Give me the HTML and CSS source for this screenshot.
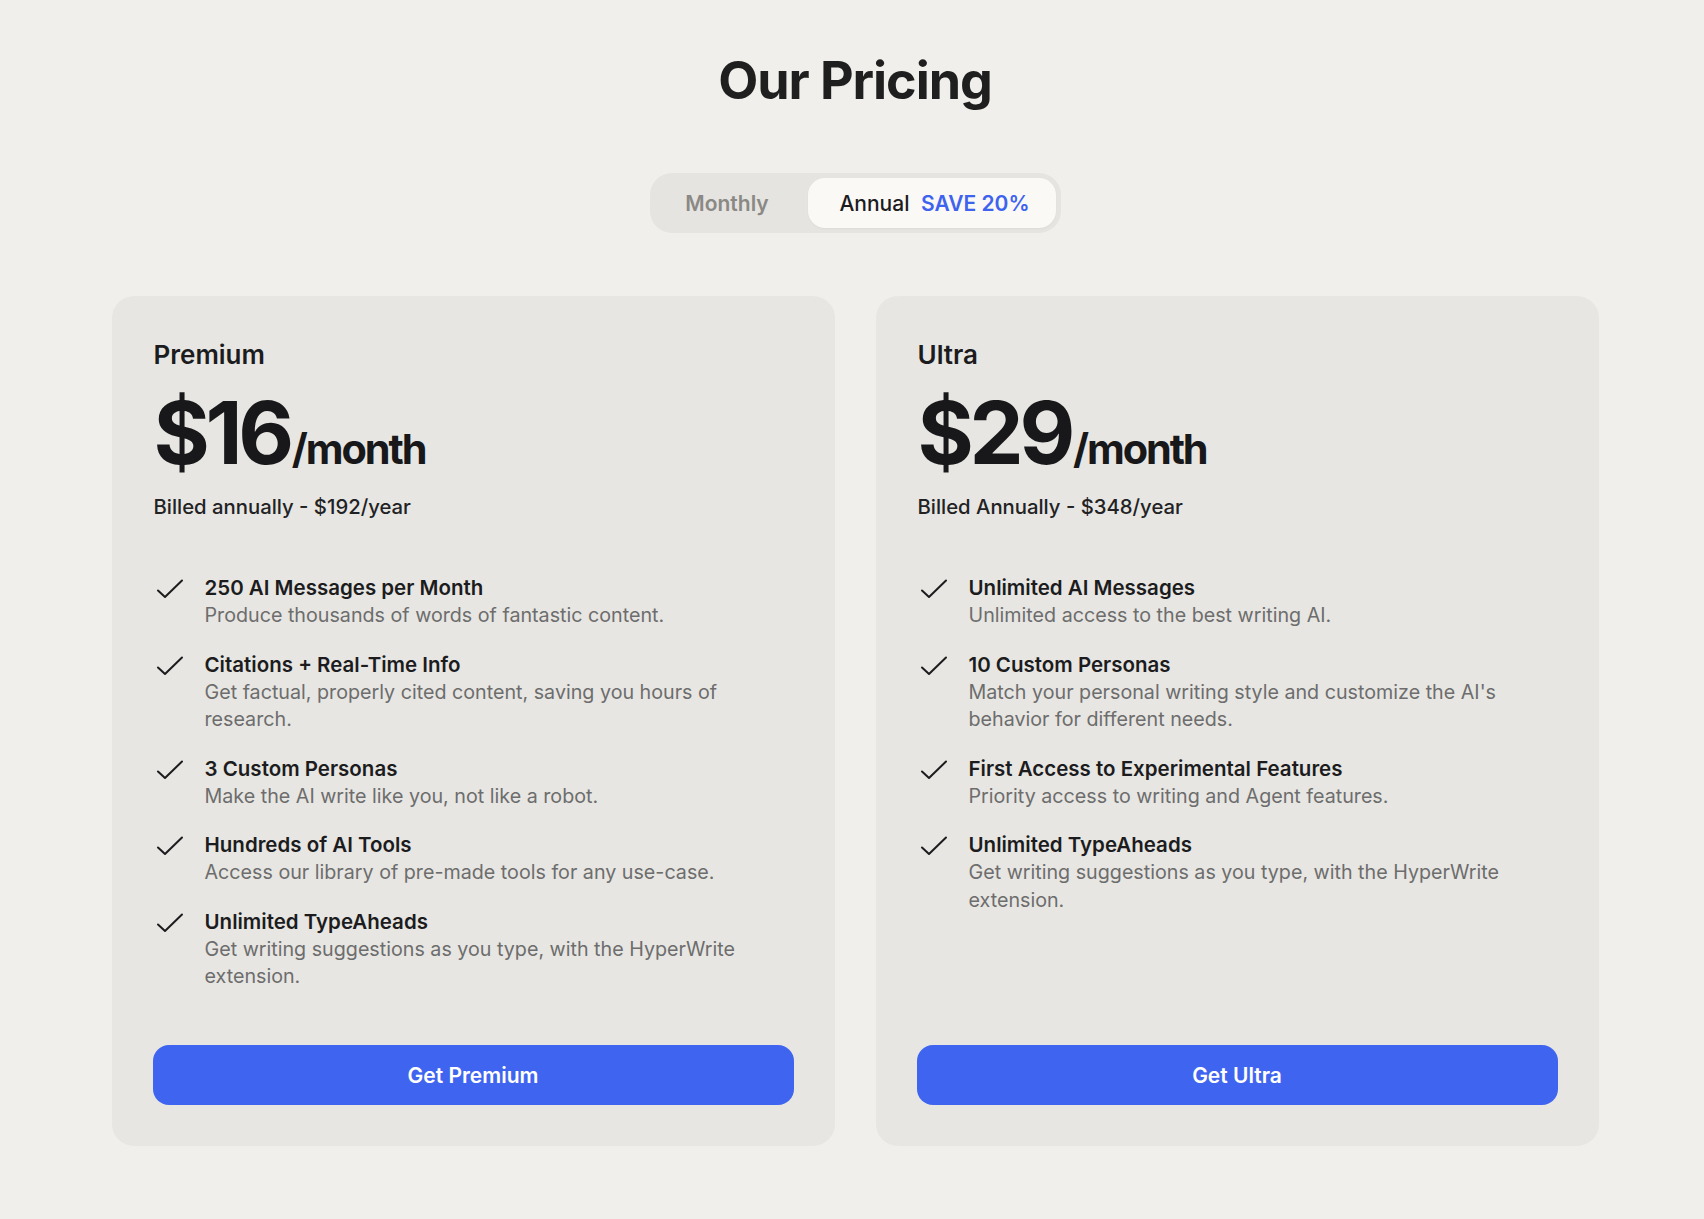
FILE: index.html
```html
<!DOCTYPE html>
<html lang="en">
<head>
<meta charset="utf-8">
<title>Our Pricing</title>
<link rel="stylesheet" href="styles.css">
</head>
<body>
<main class="page">
  <h1 class="page-title">Our Pricing</h1>

  <div class="toggle">
    <button class="toggle-opt">Monthly</button>
    <button class="toggle-opt is-active">Annual <span class="save">SAVE 20%</span></button>
  </div>

  <section class="plans">
    <article class="plan">
      <h2 class="plan-name">Premium</h2>
      <div class="price"><span class="amount">$16</span><span class="per">/month</span></div>
      <p class="billed">Billed annually - $192/year</p>
      <ul class="features">
        <li class="feature">
          <svg class="check" viewBox="0 0 30 32" width="30" height="32"><path d="M4 16.5 L11 23 L28 6.5"/></svg>
          <div class="feature-text">
            <div class="feature-title">250 AI Messages per Month</div>
            <div class="feature-desc">Produce thousands of words of fantastic content.</div>
          </div>
        </li>
        <li class="feature">
          <svg class="check" viewBox="0 0 30 32" width="30" height="32"><path d="M4 16.5 L11 23 L28 6.5"/></svg>
          <div class="feature-text">
            <div class="feature-title">Citations + Real-Time Info</div>
            <div class="feature-desc">Get factual, properly cited content, saving you hours of research.</div>
          </div>
        </li>
        <li class="feature">
          <svg class="check" viewBox="0 0 30 32" width="30" height="32"><path d="M4 16.5 L11 23 L28 6.5"/></svg>
          <div class="feature-text">
            <div class="feature-title">3 Custom Personas</div>
            <div class="feature-desc">Make the AI write like you, not like a robot.</div>
          </div>
        </li>
        <li class="feature">
          <svg class="check" viewBox="0 0 30 32" width="30" height="32"><path d="M4 16.5 L11 23 L28 6.5"/></svg>
          <div class="feature-text">
            <div class="feature-title">Hundreds of AI Tools</div>
            <div class="feature-desc">Access our library of pre-made tools for any use-case.</div>
          </div>
        </li>
        <li class="feature">
          <svg class="check" viewBox="0 0 30 32" width="30" height="32"><path d="M4 16.5 L11 23 L28 6.5"/></svg>
          <div class="feature-text">
            <div class="feature-title">Unlimited TypeAheads</div>
            <div class="feature-desc">Get writing suggestions as you type, with the HyperWrite extension.</div>
          </div>
        </li>
      </ul>
      <button class="cta">Get Premium</button>
    </article>

    <article class="plan">
      <h2 class="plan-name">Ultra</h2>
      <div class="price"><span class="amount">$29</span><span class="per">/month</span></div>
      <p class="billed">Billed Annually - $348/year</p>
      <ul class="features">
        <li class="feature">
          <svg class="check" viewBox="0 0 30 32" width="30" height="32"><path d="M4 16.5 L11 23 L28 6.5"/></svg>
          <div class="feature-text">
            <div class="feature-title">Unlimited AI Messages</div>
            <div class="feature-desc">Unlimited access to the best writing AI.</div>
          </div>
        </li>
        <li class="feature">
          <svg class="check" viewBox="0 0 30 32" width="30" height="32"><path d="M4 16.5 L11 23 L28 6.5"/></svg>
          <div class="feature-text">
            <div class="feature-title">10 Custom Personas</div>
            <div class="feature-desc">Match your personal writing style and customize the AI's behavior for different needs.</div>
          </div>
        </li>
        <li class="feature">
          <svg class="check" viewBox="0 0 30 32" width="30" height="32"><path d="M4 16.5 L11 23 L28 6.5"/></svg>
          <div class="feature-text">
            <div class="feature-title">First Access to Experimental Features</div>
            <div class="feature-desc">Priority access to writing and Agent features.</div>
          </div>
        </li>
        <li class="feature">
          <svg class="check" viewBox="0 0 30 32" width="30" height="32"><path d="M4 16.5 L11 23 L28 6.5"/></svg>
          <div class="feature-text">
            <div class="feature-title">Unlimited TypeAheads</div>
            <div class="feature-desc">Get writing suggestions as you type, with the HyperWrite extension.</div>
          </div>
        </li>
      </ul>
      <button class="cta">Get Ultra</button>
    </article>
  </section>
</main>
</body>
</html>
```

FILE: styles.css
```css
* { box-sizing: border-box; }

html, body {
  margin: 0;
  padding: 0;
  background: #f0efeb;
}

body {
  font-family: Inter, "Noto Sans", "Liberation Sans", sans-serif;
  color: #1c1c1e;
  -webkit-font-smoothing: antialiased;
}

.page {
  padding: 50px 0 73px 6px;
  display: flex;
  flex-direction: column;
  align-items: center;
}

.page-title {
  margin: 0;
  font-size: 52px;
  line-height: 62px;
  font-weight: 700;
  letter-spacing: -0.02em;
  color: #1f1f1f;
}

.toggle {
  margin-top: 61px;
  display: flex;
  padding: 5px;
  background: #e5e4e0;
  border-radius: 22px;
  width: 411px;
  height: 60px;
}

.toggle-opt {
  border: 0;
  background: transparent;
  font-family: inherit;
  font-size: 21px;
  font-weight: 600;
  color: #8a8986;
  border-radius: 17px;
  cursor: pointer;
  width: 153px;
  padding: 0 8px 0 0;
}

.toggle-opt.is-active {
  width: 248px;
  padding: 0 0 0 6px;
  background: #faf9f6;
  color: #1c1c1e;
  font-weight: 500;
  box-shadow: 0 1px 2px rgba(0, 0, 0, 0.04);
}

.save {
  color: #3e63ef;
  font-weight: 600;
  margin-left: 6px;
}

.plans {
  margin-top: 63px;
  display: grid;
  grid-template-columns: 723px 723px;
  gap: 41px;
}

.plan {
  background: #e7e6e2;
  border-radius: 22px;
  padding: 43px 41px 41px;
  display: flex;
  flex-direction: column;
  min-height: 850px;
}

.plan-name,
.price,
.billed,
.features {
  margin-left: 1px;
}

.plan-name {
  margin-top: 0;
  margin-bottom: 0;
  font-size: 26px;
  line-height: 32px;
  font-weight: 600;
  color: #1c1c1e;
}

.price {
  margin-top: 19px;
  display: flex;
  align-items: baseline;
  line-height: 86px;
}

.amount {
  font-size: 86px;
  font-weight: 700;
  letter-spacing: -0.05em;
  color: #18181b;
}

.per {
  font-size: 41.4px;
  font-weight: 700;
  letter-spacing: -0.05em;
  color: #18181b;
  margin-left: 2px;
}

.billed {
  margin-top: 1px;
  margin-bottom: 0;
  font-size: 20.3px;
  line-height: 28px;
  font-weight: 500;
  color: #222224;
}

.features {
  list-style: none;
  margin-top: 53px;
  margin-bottom: 0;
  padding: 0;
  display: flex;
  flex-direction: column;
  gap: 21px;
}

.feature {
  display: flex;
  gap: 21px;
}

.check {
  flex: none;
  fill: none;
  stroke: #1c1c1e;
  stroke-width: 2;
  stroke-linecap: round;
  stroke-linejoin: round;
}

.feature-text {
  flex: 1;
}

.feature-title {
  font-size: 20.5px;
  line-height: 28px;
  font-weight: 600;
  color: #1c1c1e;
}

.feature-desc {
  font-size: 19.7px;
  line-height: 27.5px;
  font-weight: 400;
  color: #6d6d6d;
}

.cta {
  margin-top: auto;
  height: 60px;
  width: 100%;
  border: 0;
  border-radius: 16px;
  background: #3f65f0;
  color: #ffffff;
  font-family: inherit;
  font-size: 21px;
  font-weight: 600;
  cursor: pointer;
}
```
